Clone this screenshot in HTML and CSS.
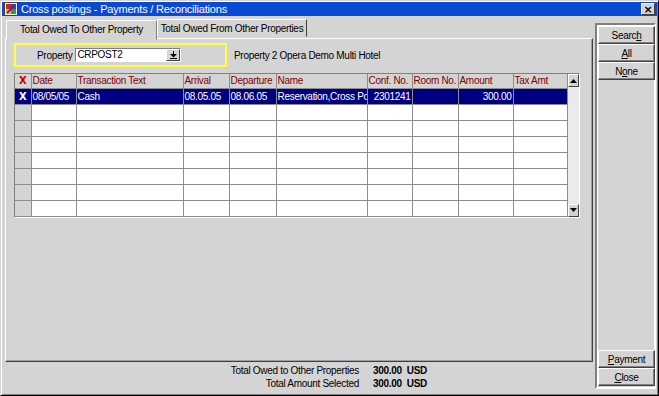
FILE: index.html
```html
<!DOCTYPE html>
<html lang="en">
<head>
    <meta charset="UTF-8">
    <title>Cross postings - Payments / Reconciliations</title>
    <link rel="stylesheet" href="styles.css">
</head>
<body>
    <div class="window">
        <div class="titlebar">
            <svg class="app-icon" width="14" height="14" viewBox="0 0 14 14">
                <rect x="0.5" y="0.5" width="13" height="13" fill="#f4f0e0" stroke="#404040"/>
                <rect x="2" y="2" width="5" height="5" fill="#d02020"/>
                <rect x="7" y="2" width="5" height="5" fill="#2050d0"/>
                <rect x="2" y="7" width="5" height="5" fill="#f0c020"/>
                <rect x="7" y="7" width="5" height="5" fill="#30a030"/>
                <path d="M3 11 L11 3" stroke="#702080" stroke-width="2"/>
            </svg>
            <span class="title">Cross postings - Payments / Reconciliations</span>
            <button class="close-x">×</button>
        </div>

        <div class="content">
            <div class="main-col">
                <div class="tabs">
                    <div class="tab active">Total Owed To Other Property</div>
                    <div class="tab">Total Owed From Other Properties</div>
                </div>
                <div class="tab-panel">
                    <div class="filter-row">
                        <div class="property-box">
                            <label>Property</label>
                            <div class="combo">
                                <span class="combo-value">CRPOST2</span>
                                <span class="combo-btn">
                                    <svg width="7" height="8" viewBox="0 0 7 8"><path d="M3 0h1v3h3L3.5 6.5 0 3h3z M0 7h7v1H0z" fill="#000"/></svg>
                                </span>
                            </div>
                        </div>
                        <span class="property-name">Property 2 Opera Demo Multi Hotel</span>
                    </div>

                    <div class="grid-wrap">
                        <table class="grid">
                            <colgroup>
                                <col style="width:16px"><col style="width:45px"><col style="width:107px">
                                <col style="width:46px"><col style="width:47px"><col style="width:91px">
                                <col style="width:45px"><col style="width:46px"><col style="width:55px">
                                <col style="width:54px">
                            </colgroup>
                            <thead>
                                <tr>
                                    <th class="mark">X</th><th>Date</th><th>Transaction Text</th><th>Arrival</th>
                                    <th>Departure</th><th>Name</th><th>Conf. No.</th><th>Room No.</th>
                                    <th>Amount</th><th>Tax Amt</th>
                                </tr>
                            </thead>
                            <tbody id="rows"></tbody>
                        </table>
                        <div class="vscroll">
                            <span class="sb-btn">
                                <svg width="7" height="4" viewBox="0 0 7 4"><path d="M3.5 0L7 4H0z" fill="#000"/></svg>
                            </span>
                            <span class="sb-track"></span>
                            <span class="sb-btn">
                                <svg width="7" height="4" viewBox="0 0 7 4"><path d="M0 0h7L3.5 4z" fill="#000"/></svg>
                            </span>
                        </div>
                    </div>
                </div>

                <div class="totals">
                    <span class="t-label">Total Owed to Other Properties</span>
                    <span class="t-value">300.00&nbsp;&nbsp;USD</span>
                    <span class="t-label">Total Amount Selected</span>
                    <span class="t-value">300.00&nbsp;&nbsp;USD</span>
                </div>
            </div>

            <div class="side-col">
                <button class="btn">Searc<u>h</u></button>
                <button class="btn"><u>A</u>ll</button>
                <button class="btn">N<u>o</u>ne</button>
                <div class="spacer"></div>
                <button class="btn"><u>P</u>ayment</button>
                <button class="btn"><u>C</u>lose</button>
            </div>
        </div>
    </div>

    <script>
        const postings = [
            { date: '08/05/05', text: 'Cash', arrival: '08.05.05', departure: '08.06.05',
              name: 'Reservation,Cross Posting', conf: '2301241', room: '', amount: '300.00', tax: '' }
        ];

        function renderRows() {
            const body = document.getElementById('rows');
            let html = '';
            for (let i = 0; i < 8; i++) {
                const p = postings[i];
                if (p) {
                    html += `<tr class="selected">
                        <td class="mark">X</td><td>${p.date}</td><td>${p.text}</td><td>${p.arrival}</td>
                        <td>${p.departure}</td><td>${p.name}</td><td class="num">${p.conf}</td>
                        <td>${p.room}</td><td class="num">${p.amount}</td><td>${p.tax}</td>
                    </tr>`;
                } else {
                    html += '<tr><td class="mark"></td><td></td><td></td><td></td><td></td><td></td><td></td><td></td><td></td><td></td></tr>';
                }
            }
            body.innerHTML = html;
        }

        renderRows();
    </script>
</body>
</html>
```

FILE: styles.css
```css
* {
    box-sizing: border-box;
}
body {
    margin: 0;
    font-family: "Liberation Sans", Arial, sans-serif;
    font-size: 10px;
    letter-spacing: -0.3px;
    color: #000;
    background: #000;
}
.window {
    width: 659px;
    height: 396px;
    background: #d4d4d4;
    border: 1px solid #000;
    border-top-color: #d4d4d4;
    border-left-color: #d4d4d4;
    display: flex;
    flex-direction: column;
    box-shadow: inset 1px 1px 0 #fff, inset -1px -1px 0 #808080;
}
.titlebar {
    height: 17px;
    margin: 1px 1px 0 1px;
    background: #0a49d4;
    color: #fff;
    display: flex;
    align-items: center;
    padding: 0 2px 0 2px;
    gap: 3px;
}
.title {
    flex: 1;
    font-size: 11px;
    letter-spacing: -0.2px;
}
.close-x {
    width: 14px;
    height: 12px;
    padding: 0;
    background: #d4d4d4;
    border: 1px solid;
    border-color: #fff #404040 #404040 #fff;
    font-family: "DejaVu Sans", sans-serif;
    font-weight: bold;
    font-size: 11px;
    line-height: 9px;
    color: #000;
}
.content {
    flex: 1;
    display: flex;
    padding: 2px 2px 6px 4px;
    gap: 2px;
}
.main-col {
    width: 590px;
    display: flex;
    flex-direction: column;
}
.tabs {
    display: flex;
    align-items: flex-end;
    height: 21px;
    padding-left: 1px;
    position: relative;
    z-index: 1;
}
.tab {
    height: 18px;
    width: 150px;
    border: 1px solid;
    border-color: #fff #404040 transparent #fff;
    display: flex;
    align-items: center;
    justify-content: center;
    white-space: nowrap;
    margin-bottom: 2px;
}
.tab.active {
    height: 20px;
    width: 151px;
    margin-bottom: -1px;
    background: #d4d4d4;
    border-right-color: #808080;
    padding-bottom: 2px;
}
.tab-panel {
    height: 324px;
    border: 1px solid;
    border-color: #fff #404040 #404040 #fff;
    box-shadow: inset -1px -1px 0 #a0a0a0;
    padding: 4px 8px;
    margin-top: -1px;
}
.filter-row {
    display: flex;
    align-items: center;
    gap: 7px;
}
.property-box {
    width: 213px;
    height: 24px;
    border: 2px solid #ffff40;
    display: flex;
    align-items: center;
    padding-left: 21px;
    gap: 3px;
}
.combo {
    display: flex;
    width: 106px;
    height: 14px;
    border: 1px solid;
    border-color: #808080 #fff #fff #808080;
    background: #fff;
}
.combo-value {
    flex: 1;
    line-height: 12px;
    padding-left: 1px;
}
.combo-btn {
    width: 14px;
    border: 1px solid;
    border-color: #fff #404040 #404040 #fff;
    background: #d4d4d4;
    display: flex;
    align-items: center;
    justify-content: center;
}
.property-name {
    padding-top: 1px;
}
.grid-wrap {
    display: flex;
    margin-top: 6px;
    width: 566px;
    border: 1px solid;
    border-color: #808080 #fff #fff #808080;
}
.grid {
    border-collapse: collapse;
    table-layout: fixed;
    width: 552px;
}
.grid th, .grid td {
    border: 1px solid #8c8c8c;
    padding: 0 1px;
    white-space: nowrap;
    overflow: hidden;
    text-align: left;
    font-weight: normal;
}
.grid th {
    height: 14px;
    color: #800000;
    background: #d4d4d4;
    line-height: 12px;
    border-top: none;
}
.grid th:first-child, .grid td:first-child {
    border-left: none;
}
.grid td {
    height: 16px;
    background: #fff;
}
.grid td.mark {
    background: #d4d4d4;
}
.grid .mark {
    text-align: center;
    font-weight: bold;
    color: #c00000;
    font-family: "DejaVu Sans", sans-serif;
    font-size: 10px;
}
.grid tr.selected td {
    background: #000080;
    color: #fff;
}
.grid tr.selected td.mark {
    color: #fff;
}
.grid td.num {
    text-align: right;
}
.vscroll {
    width: 13px;
    display: flex;
    flex-direction: column;
    background: #ebebeb;
}
.sb-btn {
    height: 13px;
    background: #d4d4d4;
    border: 1px solid;
    border-color: #fff #404040 #404040 #fff;
    display: flex;
    align-items: center;
    justify-content: center;
}
.sb-track {
    flex: 1;
}
.totals {
    display: grid;
    grid-template-columns: 354px auto;
    column-gap: 14px;
    padding-top: 2px;
    line-height: 13px;
}
.t-label {
    text-align: right;
}
.t-value {
    font-weight: bold;
}
.side-col {
    width: 61px;
    margin-top: 5px;
    margin-bottom: 1px;
    display: flex;
    flex-direction: column;
    padding: 1px;
    border: 2px solid;
    border-color: #808080 #fff #fff #808080;
    box-shadow: inset 1px 1px 0 #fff;
}
.btn {
    height: 18px;
    width: 57px;
    padding: 0;
    font-family: inherit;
    font-size: 10px;
    letter-spacing: -0.3px;
    background: #d4d4d4;
    border: 1px solid;
    border-color: #fff #404040 #404040 #fff;
    box-shadow: inset -1px -1px 0 #808080;
    color: #000;
}
.spacer {
    flex: 1;
}
```
